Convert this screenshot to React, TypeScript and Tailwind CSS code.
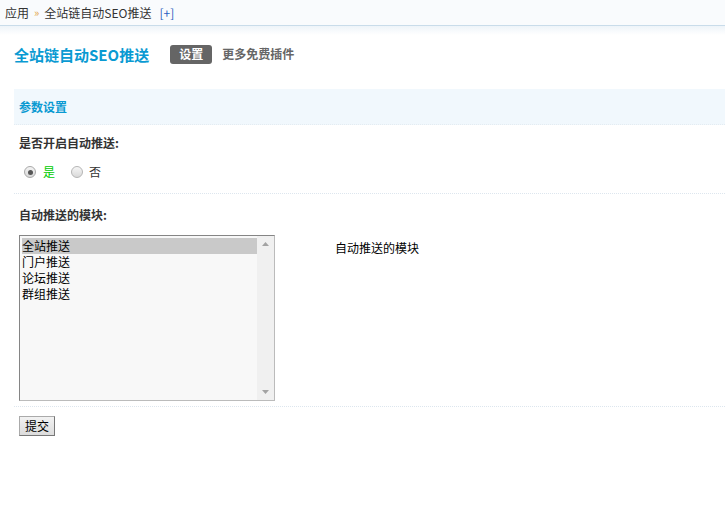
const FONT = { fontFamily: '"Noto Sans CJK SC", "Liberation Sans", sans-serif' };

const OPTIONS = ["全站推送", "门户推送", "论坛推送", "群组推送"];

export default function App() {
  return (
    <div className="min-h-[530px] w-[725px] bg-white text-[12px] text-[#333]" style={FONT}>
      <div className="h-[26px] bg-[#f9fbfd] border-b border-[#c9dcea] flex items-center pl-[5px] leading-none">
        <span>应用</span>
        <span className="mx-[5px] text-[11px] text-[#e2a54a]">»</span>
        <span>全站链自动SEO推送</span>
        <span className="ml-[8px] text-[#2b5fc0]">[+]</span>
      </div>
      <div className="h-[9px] bg-gradient-to-b from-[#eef4f9] to-white" />

      <div className="flex items-center h-[38px] pl-[14px]">
        <h1 className="text-[15px] font-bold text-[#0a9ad2] leading-none">全站链自动SEO推送</h1>
        <span className="ml-[21px] h-[19px] px-[9px] rounded-[3px] bg-[#656565] text-white font-bold flex items-center leading-none">
          设置
        </span>
        <span className="ml-[10px] font-bold text-[#666] leading-none">更多免费插件</span>
      </div>

      <div className="ml-[14px] mt-[16px]">
        <div className="h-[36px] bg-[#f1f8fd] flex items-center pl-[5px] font-bold text-[#0a9ad2] border-b border-dotted border-[#e4ecf2]">
          参数设置
        </div>

        <div className="border-b border-dotted border-[#dde6ee] pl-[5px]">
          <div className="h-[36px] flex items-center font-bold">是否开启自动推送:</div>
          <div className="h-[32px] flex items-center pb-[10px]">
            <span className="ml-[5px] w-[12px] h-[12px] rounded-full border border-[#a9a9a9] bg-gradient-to-b from-[#f4f4f4] to-[#d8d8d8] flex items-center justify-center">
              <span className="w-[5px] h-[5px] rounded-full bg-[#555]" />
            </span>
            <span className="ml-[7px] text-[#00cc00]">是</span>
            <span className="ml-[16px] w-[12px] h-[12px] rounded-full border border-[#b5b5b5] bg-gradient-to-b from-[#f6f6f6] to-[#d9d9d9]" />
            <span className="ml-[6px]">否</span>
          </div>
        </div>

        <div className="h-[41px] flex items-center pl-[5px] font-bold">自动推送的模块:</div>

        <div className="flex border-b border-dotted border-[#dde6ee] pb-[5px]">
          <div className="w-[316px] pl-[5px]">
            <div className="w-[256px] h-[166px] border border-[#858585] border-r-[#bbb] border-b-[#bbb] bg-[#f8f8f8] flex">
              <div className="flex-1 pt-[2px] pl-[2px]">
                {OPTIONS.map((o, i) => (
                  <div key={o} className={"h-[16px] leading-[16px] text-black " + (i === 0 ? "bg-[#c9c9c9]" : "")}>
                    {o}
                  </div>
                ))}
              </div>
              <div className="w-[17px] bg-[#f0f0f0] flex flex-col justify-between items-center py-[6px]">
                <svg width="7" height="4" viewBox="0 0 7 4"><path d="M3.5 0L7 4H0z" fill="#a3a3a3" /></svg>
                <svg width="7" height="4" viewBox="0 0 7 4"><path d="M0 0h7L3.5 4z" fill="#a3a3a3" /></svg>
              </div>
            </div>
          </div>
          <div className="pl-[5px] pt-[4px] text-black">自动推送的模块</div>
        </div>

        <div className="pl-[5px] pt-[9px]">
          <button className="h-[20px] w-[36px] border border-[#777] border-t-[#aaa] border-l-[#aaa] bg-gradient-to-b from-[#f2f2f2] to-[#dcdcdc] text-black text-[12px] leading-none">
            提交
          </button>
        </div>
      </div>
    </div>
  );
}
